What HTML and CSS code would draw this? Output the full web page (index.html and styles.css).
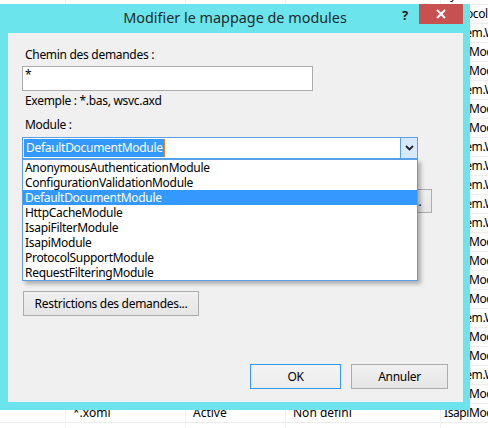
FILE: index.html
```html
<!DOCTYPE html>
<html lang="fr">
<head>
<meta charset="utf-8">
<title>Modifier le mappage de modules</title>
<link rel="stylesheet" href="styles.css">
</head>
<body>
<div class="sheet">
  <div class="row"><span></span><span></span><span></span><span></span><span>System.WebServer</span></div>
  <div class="row"><span></span><span></span><span></span><span></span><span>ProtocolSupport</span></div>
  <div class="row"><span></span><span></span><span></span><span></span><span>System.Web</span></div>
  <div class="row"><span></span><span></span><span></span><span></span><span>IsapiModule</span></div>
  <div class="row"><span></span><span></span><span></span><span></span><span>IsapiModule</span></div>
  <div class="row"><span></span><span></span><span></span><span></span><span>System.Web</span></div>
  <div class="row"><span></span><span></span><span></span><span></span><span>IsapiModule</span></div>
  <div class="row"><span></span><span></span><span></span><span></span><span>IsapiModule</span></div>
  <div class="row"><span></span><span></span><span></span><span></span><span>System.Web</span></div>
  <div class="row"><span></span><span></span><span></span><span></span><span>System.Web</span></div>
  <div class="row"><span></span><span></span><span></span><span></span><span>System.Web</span></div>
  <div class="row"><span></span><span></span><span></span><span></span><span>System.Web</span></div>
  <div class="row"><span></span><span></span><span></span><span></span><span>System.Web</span></div>
  <div class="row"><span></span><span></span><span></span><span></span><span>IsapiModule</span></div>
  <div class="row"><span></span><span></span><span></span><span></span><span>IsapiModule</span></div>
  <div class="row"><span></span><span></span><span></span><span></span><span>IsapiModule</span></div>
  <div class="row"><span></span><span></span><span></span><span></span><span>IsapiModule</span></div>
  <div class="row"><span></span><span></span><span></span><span></span><span>System.Web</span></div>
  <div class="row"><span></span><span></span><span></span><span></span><span>IsapiModule</span></div>
  <div class="row"><span></span><span></span><span></span><span></span><span>IsapiModule</span></div>
  <div class="row"><span></span><span></span><span></span><span></span><span>System.Web</span></div>
  <div class="row"><span></span><span></span><span></span><span></span><span>IsapiModule</span></div>
  <div class="row"><span></span><span>*.xoml</span><span>Active</span><span>Non défini</span><span>IsapiModule</span></div>
  <div class="row"><span></span><span></span><span></span><span></span><span></span></div>
</div>

<div class="dialog">
  <div class="titlebar">
    <div class="title">Modifier le mappage de modules</div>
    <div class="help">?</div>
    <div class="close">
      <svg width="10" height="10" viewBox="0 0 10 10"><path d="M1 1L9 9M9 1L1 9" stroke="#fff" stroke-width="2"/></svg>
    </div>
  </div>
  <div class="panel">
    <div class="label first">Chemin des demandes :</div>
    <div class="textbox wide">*</div>
    <div class="label hint">Exemple : *.bas, wsvc.axd</div>
    <div class="label module">Module :</div>
    <div class="combo-wrap">
      <div class="combo">
        <div class="combo-value"><span class="sel">DefaultDocumentModule</span><span class="caret"></span></div>
        <div class="combo-btn">
          <svg width="9" height="6" viewBox="0 0 9 6"><path d="M1 1L4.5 4.5L8 1" fill="none" stroke="#222" stroke-width="1.8"/></svg>
        </div>
      </div>
      <div class="dropdown">
        <div class="opt">AnonymousAuthenticationModule</div>
        <div class="opt">ConfigurationValidationModule</div>
        <div class="opt active">DefaultDocumentModule</div>
        <div class="opt">HttpCacheModule</div>
        <div class="opt">IsapiFilterModule</div>
        <div class="opt">IsapiModule</div>
        <div class="opt">ProtocolSupportModule</div>
        <div class="opt">RequestFilteringModule</div>
      </div>
    </div>
    <div class="label exec">Exécutable (facultatif) :</div>
    <div class="exec-row">
      <div class="textbox exec-input"></div>
      <div class="btn browse">...</div>
    </div>
    <div class="label name">Nom :</div>
    <div class="textbox wide"></div>
    <div class="btn restrict">Restrictions des demandes...</div>
    <div class="actions">
      <div class="btn ok">OK</div>
      <div class="btn cancel">Annuler</div>
    </div>
  </div>
</div>
</body>
</html>
```

FILE: styles.css
```css
html, body {
  margin: 0;
  padding: 0;
}
body {
  width: 488px;
  height: 428px;
  overflow: hidden;
  position: relative;
  background: #ffffff;
  font-family: "Noto Sans", "Open Sans", sans-serif;
  font-size: 12px;
  letter-spacing: -0.3px;
  color: #000;
}

/* background list */
.sheet {
  margin-top: -14px;
}
.row {
  display: grid;
  grid-template-columns: 65px 120px 100px 155px 48px;
  height: 19px;
}
.row span {
  box-sizing: border-box;
  border-left: 1px solid #f0f0f0;
  border-bottom: 1px solid #ededed;
  padding-left: 7px;
  line-height: 18px;
  white-space: nowrap;
  overflow: hidden;
  letter-spacing: 0;
}
.row span:first-child { border-left: none; }
.row span:last-child { padding-left: 3px; letter-spacing: -0.4px; }

/* dialog window */
.dialog {
  position: absolute;
  left: 0;
  top: 4px;
  width: 470px;
  height: 406px;
  background: #6be4eb;
  display: flex;
  flex-direction: column;
}
.titlebar {
  height: 29px;
  display: flex;
  align-items: flex-start;
}
.title {
  flex: 1;
  text-align: center;
  font-size: 14.4px;
  letter-spacing: 0;
  line-height: 28px;
  color: #1f2b2b;
  padding-left: 78px;
  white-space: nowrap;
}
.help {
  width: 26px;
  font-weight: bold;
  font-size: 13px;
  line-height: 22px;
  color: #1a1a1a;
  text-align: center;
  margin-right: 1px;
}
.close {
  width: 44px;
  height: 20px;
  background: #c75050;
  display: flex;
  align-items: center;
  justify-content: center;
  margin-right: 7px;
}

.panel {
  flex: 1;
  margin: 0 7px 8px 8px;
  background: #f0f0f0;
  padding-left: 14px;
  display: flex;
  flex-direction: column;
  align-items: flex-start;
}
.label {
  line-height: 16px;
  height: 16px;
  padding-left: 3px;
  white-space: nowrap;
}
.first { margin-top: 14px; margin-bottom: 3px; }
.hint { margin-top: 2px; }
.module { margin-top: 8px; margin-bottom: 4px; }
.exec { margin-top: 8px; margin-bottom: 6px; }
.name { margin-top: 8px; margin-bottom: 4px; }

.textbox {
  box-sizing: border-box;
  height: 25px;
  background: #fff;
  border: 1px solid #acacac;
  padding: 0 2px;
  line-height: 16px;
}
.wide { width: 291px; }

.combo-wrap {
  position: relative;
  width: 396px;
}
.combo {
  box-sizing: border-box;
  height: 22px;
  border: 1px solid #5b9fe6;
  background: #fff;
  display: flex;
}
.combo-value {
  flex: 1;
  padding: 1px 0 1px 1px;
  display: flex;
}
.sel {
  background: #3399ff;
  color: #fff;
  padding: 0 1px 0 2px;
  line-height: 18px;
}
.caret {
  width: 1px;
  height: 18px;
  background: #e8820f;
}
.combo-btn {
  width: 16px;
  background: #d7e9fb;
  border-left: 1px solid #5b9fe6;
  display: flex;
  align-items: center;
  justify-content: center;
}
.dropdown {
  position: absolute;
  left: 0;
  top: 22px;
  width: 396px;
  box-sizing: border-box;
  background: #fff;
  border: 1px solid #5b9fe6;
  box-shadow: 3px 3px 4px rgba(0, 0, 0, 0.28);
  z-index: 5;
}
.opt {
  height: 15px;
  line-height: 15px;
  padding-left: 2px;
  white-space: nowrap;
}
.opt.active {
  background: #3399ff;
  color: #fff;
}

.exec-row {
  display: flex;
  gap: 12px;
}
.exec-input { width: 368px; height: 24px; }

.btn {
  box-sizing: border-box;
  height: 25px;
  border: 1px solid #acacac;
  background: linear-gradient(#f0f0f0, #e5e5e5);
  display: flex;
  align-items: center;
  justify-content: center;
  white-space: nowrap;
  color: #000;
}
.browse { width: 30px; height: 24px; }
.restrict {
  margin-top: 25px;
  width: 176px;
  margin-left: 1px;
}
.actions {
  margin-top: auto;
  margin-bottom: 13px;
  align-self: stretch;
  display: flex;
  justify-content: flex-end;
  gap: 10px;
  padding-right: 15px;
}
.ok {
  width: 91px;
  border-color: #3399ff;
  background: linear-gradient(#f4f4f4, #ececec);
}
.cancel { width: 97px; }
```
